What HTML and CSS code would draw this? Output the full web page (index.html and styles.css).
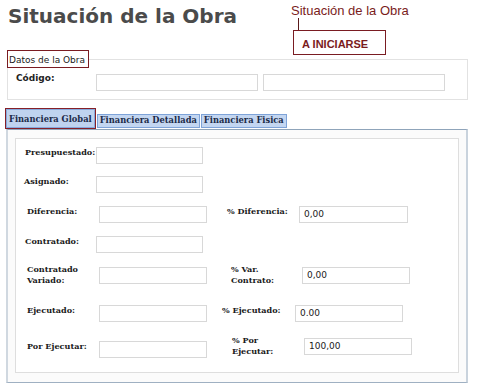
FILE: index.html
```html
<!DOCTYPE html>
<html lang="es">
<head>
<meta charset="utf-8">
<title>Situación de la Obra</title>
<link rel="stylesheet" href="styles.css">
</head>
<body>
<header class="top">
  <h1 class="title">Situación de la Obra</h1>
  <div class="status">
    <div class="status-caption">Situación de la Obra</div>
    <div class="status-line"></div>
    <div class="status-box">A INICIARSE</div>
  </div>
</header>

<fieldset class="datos">
  <legend class="datos-legend">Datos de la Obra</legend>
  <div class="codigo-row">
    <label class="codigo-label">Código:</label>
    <input class="inp inp-codigo1" type="text">
    <input class="inp inp-codigo2" type="text">
  </div>
</fieldset>

<nav class="tabs">
  <span class="tab tab-active">Financiera Global</span>
  <span class="tab">Financiera Detallada</span>
  <span class="tab">Financiera Fisica</span>
</nav>

<section class="panel">
  <div class="panel-inner">
    <div class="row row-presu">
      <label class="lbl lbl-single">Presupuestado:</label>
      <input class="inp inp-left" type="text">
    </div>
    <div class="row row-asig">
      <label class="lbl lbl-single">Asignado:</label>
      <input class="inp inp-left" type="text">
    </div>
    <div class="row row-dif">
      <label class="lbl lbl-single">Diferencia:</label>
      <input class="inp inp-left" type="text">
      <div class="pair">
        <label class="lbl lbl2 lbl-single">% Diferencia:</label>
        <input class="inp inp-right" type="text" value="0,00">
      </div>
    </div>
    <div class="row row-contr">
      <label class="lbl lbl-single">Contratado:</label>
      <input class="inp inp-left" type="text">
    </div>
    <div class="row row-var">
      <label class="lbl">Contratado<br>Variado:</label>
      <input class="inp inp-left" type="text">
      <div class="pair">
        <label class="lbl lbl2">% Var.<br>Contrato:</label>
        <input class="inp inp-right" type="text" value="0,00">
      </div>
    </div>
    <div class="row row-ejec">
      <label class="lbl lbl-single">Ejecutado:</label>
      <input class="inp inp-left" type="text">
      <div class="pair">
        <label class="lbl lbl2 lbl-single">% Ejecutado:</label>
        <input class="inp inp-right" type="text" value="0.00">
      </div>
    </div>
    <div class="row row-por">
      <label class="lbl lbl-single">Por Ejecutar:</label>
      <input class="inp inp-left" type="text">
      <div class="pair pair-up">
        <label class="lbl lbl2">% Por<br>Ejecutar:</label>
        <input class="inp inp-right" type="text" value="100,00">
      </div>
    </div>
  </div>
</section>
</body>
</html>
```

FILE: styles.css
```css
html, body {
  margin: 0;
  padding: 0;
  background: #ffffff;
}

body {
  width: 479px;
  height: 391px;
  overflow: hidden;
  font-family: "DejaVu Sans", Verdana, sans-serif;
  color: #222;
}

/* ---------- header ---------- */
.top {
  display: grid;
  grid-template-columns: 291px 1fr;
  align-items: start;
  padding-top: 3px;
  margin-bottom: -5px;
}

.title {
  margin: 1px 0 0 8px;
  font-family: "DejaVu Sans", Verdana, sans-serif;
  font-weight: bold;
  font-size: 20px;
  line-height: 24px;
  color: #4b4b4b;
}

.status {
  display: flex;
  flex-direction: column;
  align-items: flex-start;
}

.status-caption {
  font-family: "Liberation Sans", Arial, sans-serif;
  font-size: 13px;
  line-height: 15px;
  color: #7a1c1c;
}

.status-line {
  width: 1px;
  height: 12px;
  margin-left: 7px;
  background: #5a1a1a;
}

.status-box {
  margin-left: 2px;
  box-sizing: border-box;
  width: 93px;
  height: 25px;
  padding: 7px 0 0 8px;
  border: 1px solid #7a1c22;
  font-family: "Liberation Sans", Arial, sans-serif;
  font-weight: bold;
  font-size: 11px;
  line-height: 13px;
  color: #7a1c1c;
}

/* ---------- datos de la obra ---------- */
.datos {
  margin: 0 0 0 7px;
  padding: 0 0 8px 0;
  width: 461px;
  box-sizing: border-box;
  border: 1px solid #e2e2e2;
}

.datos-legend {
  margin-left: -1px;
  padding: 2px 3px 0 1px;
  border: 1px solid #7a1c22;
  font-size: 9px;
  line-height: 14px;
  color: #1a1a1a;
}

.codigo-row {
  display: flex;
  align-items: flex-start;
  margin-top: 6px;
  padding-left: 8px;
}

.codigo-label {
  width: 80px;
  margin-top: -3px;
  font-weight: bold;
  font-size: 9px;
  line-height: 14px;
  color: #222;
}

.inp {
  box-sizing: border-box;
  height: 17px;
  margin: 0;
  padding: 0 4px;
  border: 1px solid #d8d8d8;
  background: #fff;
  font-family: "DejaVu Sans", Verdana, sans-serif;
  font-size: 9px;
  color: #222;
  outline: none;
}

.inp-codigo1 { width: 162px; }
.inp-codigo2 { width: 182px; margin-left: 5px; }

/* ---------- tabs ---------- */
.tabs {
  display: flex;
  align-items: flex-end;
  gap: 1px;
  height: 21px;
  margin: 8px 0 0 5px;
}

.tab {
  box-sizing: border-box;
  height: 14px;
  margin-bottom: 1px;
  padding: 0 2px 2px;
  border: 1px solid #7ea3d8;
  background: #c3d6f1;
  font-family: "DejaVu Serif", Georgia, serif;
  font-weight: bold;
  font-size: 8.3px;
  line-height: 10px;
  color: #1b2a47;
  white-space: nowrap;
}

.tab-active {
  height: 21px;
  margin-bottom: 0;
  padding: 5px 3px 0 3px;
  border: 1px solid #862028;
  box-shadow: inset 0 0 0 1px #86a9dc;
  background: #bfd3ef;
}

/* ---------- panel ---------- */
.panel {
  box-sizing: border-box;
  width: 462px;
  margin-left: 6px;
  padding: 8px 7px 9px 7px;
  border-style: solid;
  border-color: #8fa4ba #c9d3dd #9fb0c2 #d0d8e0;
  border-width: 1px 2px 1px 2px;
  background: #fbfbfb;
}

.panel-inner {
  display: grid;
  grid-template-rows: 29px 30px 30px 31px 38px 36px 22px;
  align-items: start;
  padding: 5px 0 12px 0;
  border: 1px solid #dedede;
  background: #fff;
}

.row {
  display: flex;
  align-items: center;
  height: 22px;
  padding-left: var(--pl, 9px);
}

.lbl {
  flex: none;
  width: var(--lw, 71px);
  font-family: "DejaVu Serif", Georgia, serif;
  font-weight: bold;
  font-size: 8.1px;
  line-height: 11px;
  color: #1a1a1a;
  white-space: nowrap;
}

.lbl-single {
  padding-bottom: 5px;
}

.inp-left {
  width: var(--iw, 107px);
}

.pair {
  display: flex;
  align-items: center;
  margin-left: var(--g, 20px);
}

.pair-up {
  margin-bottom: 6px;
}

.lbl2 {
  width: var(--lw2, 72px);
}

.inp-right {
  width: var(--iw2, 109px);
}

.row-presu { --pl: 9px;  --lw: 71px; --iw: 107px; }
.row-asig  { --pl: 8px;  --lw: 72px; --iw: 107px; }
.row-dif   { --pl: 11px; --lw: 72px; --iw: 108px; --g: 20px; --lw2: 72px; --iw2: 109px; }
.row-contr { --pl: 9px;  --lw: 71px; --iw: 107px; }
.row-var   { --pl: 11px; --lw: 72px; --iw: 108px; --g: 24px; --lw2: 71px; --iw2: 108px; }
.row-ejec  { --pl: 11px; --lw: 72px; --iw: 108px; --g: 15px; --lw2: 73px; --iw2: 108px; }
.row-por   { --pl: 11px; --lw: 72px; --iw: 108px; --g: 25px; --lw2: 72px; --iw2: 108px; }
```
